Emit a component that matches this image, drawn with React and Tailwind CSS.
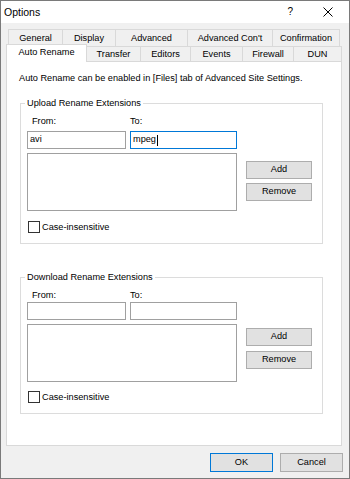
import React from "react";

function Btn({ children, className = "" }) {
  return (
    <div
      className={
        "flex h-[18px] w-[66px] items-center justify-center border border-[#adadad] bg-[#e1e1e1] leading-none " +
        className
      }
    >
      {children}
    </div>
  );
}

function Group({ title, from = "", to = "", focused = false, tight = false }) {
  return (
    <div
      className={
        "relative ml-[13px] w-[303px] border border-[#dcdcdc] " +
        (tight ? "mt-[33px] h-[137px]" : "mt-[19px] h-[141px]")
      }
    >
      <span className="absolute -top-[6px] left-[4px] bg-white px-[2px] leading-[11px]">
        {title}
      </span>
      <div className="flex flex-col pl-[6px] pt-[12px]">
        <div className="flex h-[11px] leading-[11px]">
          <span className="ml-[5px] w-[98px]">From:</span>
          <span>To:</span>
        </div>
        <div className={"flex gap-[4px] " + (tight ? "mt-[1px]" : "mt-[4px]")}>
          <div className="flex h-[18px] w-[99px] items-center border border-[#a0a0a0] bg-white pl-[2px]">
            {from}
          </div>
          <div
            className={
              "flex h-[18px] w-[107px] items-center border bg-white pl-[2px] " +
              (focused ? "border-[#0078d7]" : "border-[#a0a0a0]")
            }
          >
            {to}
            {focused && <span className="ml-[1px] h-[11px] w-[1px] bg-black" />}
          </div>
        </div>
        <div className="mt-[4px] flex">
          <div className="h-[58px] w-[210px] border border-[#a0a0a0] bg-white" />
          <div
            className={
              "ml-[9px] flex flex-col " +
              (tight ? "mt-[4px] gap-[5px]" : "mt-[8px] gap-[4px]")
            }
          >
            <Btn>Add</Btn>
            <Btn>Remove</Btn>
          </div>
        </div>
        <div
          className={
            "flex items-center " + (tight ? "mt-[9px]" : "mt-[10px]")
          }
        >
          <div className="ml-[1px] h-[12px] w-[12px] border border-[#333333] bg-white" />
          <span className="ml-[2px] leading-[12px]">Case-insensitive</span>
        </div>
      </div>
    </div>
  );
}

export default function App() {
  const row1 = [
    ["General", 54],
    ["Display", 53],
    ["Advanced", 72],
    ["Advanced Con't", 85],
    ["Confirmation", 68],
  ];
  const row2 = [
    ["Transfer", 53],
    ["Editors", 50],
    ["Events", 52],
    ["Firewall", 51],
    ["DUN", 49],
  ];
  return (
    <div className="flex h-[479px] w-[350px] flex-col overflow-hidden border border-[#7a7a7a] bg-[#f0f0f0] font-['Liberation_Sans',Arial,sans-serif] text-[9.2px] text-black">
      {/* title bar */}
      <div className="flex h-[22px] shrink-0 items-center bg-white pl-[3px]">
        <span className="text-[10.5px] leading-none">Options</span>
        <span className="ml-auto text-[10px] leading-none">?</span>
        <svg
          className="ml-[30px] mr-[16px]"
          width="10"
          height="10"
          viewBox="0 0 10 10"
        >
          <path d="M0.5 0.5 L9.5 9.5 M9.5 0.5 L0.5 9.5" stroke="#000" strokeWidth="1" />
        </svg>
      </div>

      {/* client */}
      <div className="flex flex-1 flex-col px-[5px]">
        {/* tab row 1 */}
        <div className="ml-[2px] mt-[6px] flex h-[17px]">
          {row1.map(([t, w], i) => (
            <div
              key={t}
              style={{ width: w }}
              className={
                "flex items-center justify-center border-l border-t border-[#d9d9d9] pt-[2px] leading-none " +
                (i === row1.length - 1 ? "border-r" : "")
              }
            >
              {t}
            </div>
          ))}
        </div>
        {/* tab row 2 */}
        <div className="flex h-[15px] items-end">
          <div className="relative z-10 -mb-[1px] flex h-[18px] w-[81px] justify-center border-l border-r border-t border-[#d9d9d9] bg-white pt-[3px] leading-none">
            Auto Rename
          </div>
          {row2.map(([t, w], i) => (
            <div
              key={t}
              style={{ width: w }}
              className={
                "flex h-[15px] items-center justify-center border-t border-[#d9d9d9] pt-[1px] leading-none " +
                (i === 0 ? "" : "border-l ") +
                (i === row2.length - 1 ? "border-r" : "")
              }
            >
              {t}
            </div>
          ))}
        </div>

        {/* panel */}
        <div className="flex h-[385px] w-[336px] flex-col border border-[#d9d9d9] bg-white">
          <div className="pl-[12px] pt-[11px] leading-[11px]">
            Auto Rename can be enabled in [Files] tab of Advanced Site Settings.
          </div>
          <Group title="Upload Rename Extensions" from="avi" to="mpeg" focused />
          <Group title="Download Rename Extensions" tight />
        </div>

        {/* bottom buttons */}
        <div className="mr-[1px] mt-[7px] flex justify-end gap-[7px]">
          <div className="flex h-[19px] w-[63px] items-center justify-center border border-[#0078d7] bg-[#e1e1e1] leading-none">
            OK
          </div>
          <div className="flex h-[19px] w-[63px] items-center justify-center border border-[#adadad] bg-[#e1e1e1] leading-none">
            Cancel
          </div>
        </div>
      </div>
    </div>
  );
}
